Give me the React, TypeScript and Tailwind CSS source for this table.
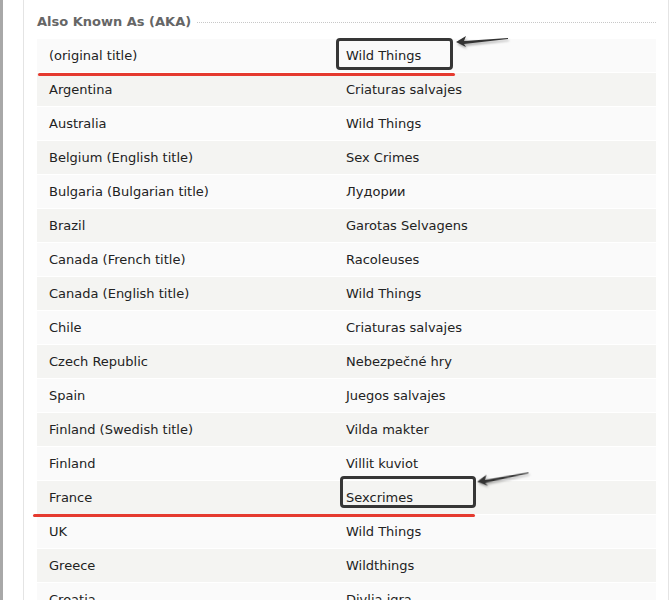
const rows: [string, string][] = [
  ["(original title)", "Wild Things"],
  ["Argentina", "Criaturas salvajes"],
  ["Australia", "Wild Things"],
  ["Belgium (English title)", "Sex Crimes"],
  ["Bulgaria (Bulgarian title)", "Лудории"],
  ["Brazil", "Garotas Selvagens"],
  ["Canada (French title)", "Racoleuses"],
  ["Canada (English title)", "Wild Things"],
  ["Chile", "Criaturas salvajes"],
  ["Czech Republic", "Nebezpečné hry"],
  ["Spain", "Juegos salvajes"],
  ["Finland (Swedish title)", "Vilda makter"],
  ["Finland", "Villit kuviot"],
  ["France", "Sexcrimes"],
  ["UK", "Wild Things"],
  ["Greece", "Wildthings"],
  ["Croatia", "Divlja igra"],
];

function Arrow({ className }: { className: string }) {
  return (
    <svg className={className} width="60" height="16" viewBox="0 0 60 16">
      <path d="M4 8 L14 2 L12 7 L56 4 L56 5 L12 10 L14 13 Z" fill="#333" />
    </svg>
  );
}

export default function App() {
  return (
    <div className="relative h-[600px] w-[670px] overflow-hidden bg-white font-['DejaVu_Sans',Verdana,sans-serif]">
      <div className="flex h-full">
        <div className="w-[3px] bg-[#a8a8a8]" />
        <div className="w-[20px]" />
        <div className="w-px bg-[#e4e4e4]" />
        <div className="flex-1 pl-[13px] pr-[12px] pt-[12px]">
          <div className="flex items-center gap-[6px] h-[18px]">
            <h2 className="text-[13px] font-bold text-[#666] leading-none">Also Known As (AKA)</h2>
            <div className="flex-1 border-t border-dotted border-[#c8c8c8] mt-[2px]" />
          </div>
          <div className="mt-[8px] pt-px">
            {rows.map(([country, title], i) => (
              <div
                key={i}
                className={
                  "flex h-[34px] items-center border-b border-white text-[13px] text-[#222] " +
                  (i % 2 === 0 ? "bg-[#fafafa]" : "bg-[#f4f4f2]")
                }
              >
                <div className="w-[309px] pl-[12px]">{country}</div>
                <div>{title}</div>
              </div>
            ))}
          </div>
        </div>
        <div className="w-px bg-[#e4e4e4]" />
        <div className="w-px" />
      </div>

      <div className="absolute left-[38px] top-[73px] h-[3px] w-[417px] bg-[#e53a2f] rounded-full" />
      <div className="absolute left-[336px] top-[38px] h-[32px] w-[117px] rounded-[4px] border-[3px] border-[#363636]" />
      <Arrow className="absolute left-[452px] top-[34px] drop-shadow-[1px_2px_1px_rgba(0,0,0,0.3)]" />

      <div className="absolute left-[33px] top-[514px] h-[3px] w-[442px] bg-[#e53a2f] rounded-full" />
      <div className="absolute left-[340px] top-[476px] h-[32px] w-[136px] rounded-[4px] border-[3px] border-[#363636]" />
      <Arrow className="absolute left-[473px] top-[471px] rotate-[-6deg] drop-shadow-[1px_2px_1px_rgba(0,0,0,0.3)]" />
    </div>
  );
}
